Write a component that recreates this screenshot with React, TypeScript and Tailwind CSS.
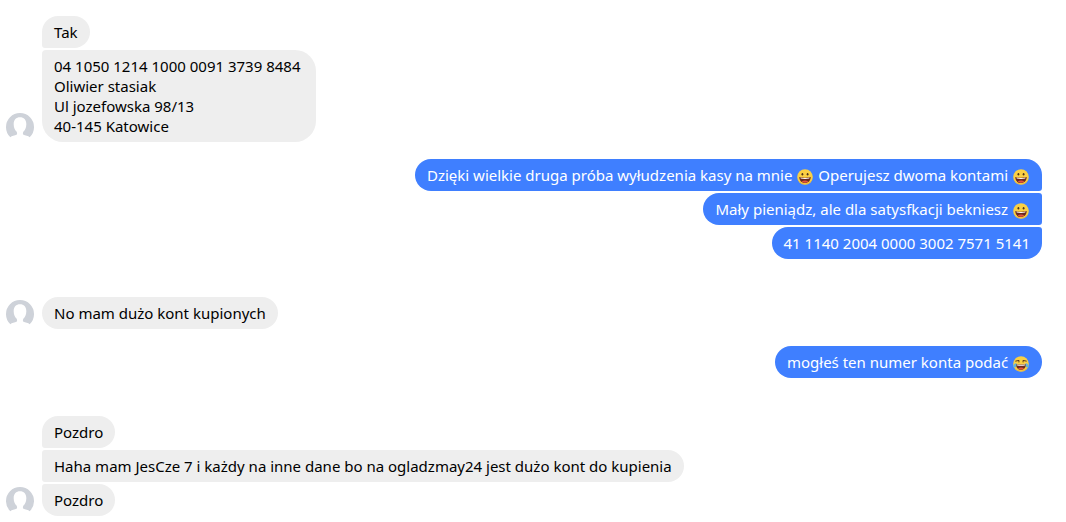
import type { ReactNode } from 'react';
import clsx from 'clsx';

interface MessageGroup {
  id: number;
  own: boolean;
  messages: ReactNode[];
}

// Grinning face
function Grin() {
  return (
    <svg role="img" aria-label="😀" viewBox="0 0 16 16" className="mx-px inline-block size-4 align-[-4px]">
      <circle cx="8" cy="8" r="7.8" fill="#fbd043" />
      <path d="M1 11a7.8 7.8 0 0 0 14 0 8.5 8.5 0 0 1-14 0z" fill="#e9a83a" />
      <ellipse cx="5.4" cy="5.2" rx=".9" ry="1.3" fill="#4d331b" />
      <ellipse cx="10.6" cy="5.2" rx=".9" ry="1.3" fill="#4d331b" />
      <path d="M2.3 8.1q5.7 1.5 11.4 0c0 3.7-2.4 6-5.7 6s-5.7-2.3-5.7-6z" fill="#6b2a20" />
      <path d="M3.4 8.5q4.6 1 9.2 0l-.4 1q-4.2 .8-8.400 0z" fill="#fff" />
      <path d="M4.6 12.600q3.400-2.400 6.800 0Q8 15 4.600 12.600z" fill="#e5533d" />
    </svg>
  );
}

// Face with tears of joy
function Joy() {
  return (
    <svg role="img" aria-label="😂" viewBox="0 0 16 16" className="mx-px inline-block size-4 align-[-4px]">
      <circle cx="8" cy="8" r="7.8" fill="#fbd043" />
      <path d="M1 11a7.8 7.8 0 0 0 14 0 8.5 8.5 0 0 1-14 0z" fill="#e9a83a" />
      <path d="M2.7 5.1 6 4.4 5.9 6M13.3 5.1 10 4.4l.1 1.6" fill="none" stroke="#5b3a1c" strokeWidth="1" strokeLinecap="round" />
      <path d="M3 8q5 1 10 0c0 3.8-2.1 5.8-5 5.8S3 11.8 3 8z" fill="#6b2a20" />
      <path d="M3.8 8.4q4.200.7 8.400 0l-.4 1q-3.800.6-7.600 0z" fill="#fff" />
      <path d="M4.9 12.5q3.100-2.200 6.200 0-3.100 2.200-6.200 0z" fill="#e5533d" />
      <path d="M3.5 6.9C1.5 7.3 0 8.8.2 10.4c.3 1.7 2.6 1.5 3 .1.3-1.1.1-2.300.3-3.600zM12.500 6.900c2 .4 3.500 1.900 3.300 3.500-.3 1.700-2.600 1.500-3 .1-.3-1.100-.1-2.300-.3-3.600z" fill="#62b5d8" />
    </svg>
  );
}

function Avatar() {
  return (
    <svg viewBox="0 0 28 28" aria-hidden="true" className="mb-px size-7 shrink-0">
      <path
        d="M4.400 24.300A14 14 0 1 1 23.600 24.300C22.500 22.800 19 22.500 17.500 21.800 16.700 21.200 16.700 19.800 17.500 18.600 19.300 17 20.200 14.500 20.300 11.500 20.500 6.800 18 4.200 14 4.200S7.500 6.800 7.700 11.500C7.800 14.500 8.700 17 10.500 18.600 11.300 19.800 11.300 21.200 10.500 21.800 9 22.500 5.500 22.800 4.400 24.300z"
        fill="#ced2d9"
      />
    </svg>
  );
}

const groups: MessageGroup[] = [
  {
    id: 1,
    own: false,
    messages: [
      'Tak',
      '04 1050 1214 1000 0091 3739 8484\u00a0\nOliwier stasiak\nUl jozefowska 98/13\n40-145 Katowice',
    ],
  },
  {
    id: 2,
    own: true,
    messages: [
      <>Dzięki wielkie druga próba wyłudzenia kasy na mnie <Grin /> Operujesz dwoma kontami <Grin /></>,
      <>Mały pieniądz, ale dla satysfkacji bekniesz <Grin /></>,
      '41 1140 2004 0000 3002 7571 5141',
    ],
  },
  { id: 3, own: false, messages: ['No mam dużo kont kupionych'] },
  { id: 4, own: true, messages: [<>mogłeś ten numer konta podać <Joy /></>] },
  {
    id: 5,
    own: false,
    messages: [
      'Pozdro',
      'Haha mam JesCze 7 i każdy na inne dane bo na ogladzmay24 jest dużo kont do kupienia',
      'Pozdro',
    ],
  },
];

function Group({ own, messages }: MessageGroup) {
  return (
    <li className={clsx('flex items-end gap-2', own ? 'mt-[17px] justify-end' : 'mt-[38px] first:mt-0')}>
      {!own && <Avatar />}
      <div className={clsx('flex min-w-0 flex-col gap-0.5', own ? 'items-end' : 'items-start')}>
        {messages.map((message, i) => {
          const first = i === 0;
          const last = i === messages.length - 1;
          return (
            <p
              key={i}
              className={clsx(
                'rounded-[21px] px-3 py-1.5 whitespace-pre-line',
                own ? 'bg-[#3f7fff] text-white' : 'bg-[#eeeeee] text-black',
                own && !first && 'rounded-tr-sm',
                own && !last && 'rounded-br-sm',
                !own && !first && 'rounded-tl-sm',
                !own && !last && 'rounded-bl-sm',
              )}
            >
              {message}
            </p>
          );
        })}
      </div>
    </li>
  );
}

export default function App() {
  return (
    <main className="bg-white pt-4 pr-6 pb-1.5 pl-1.5 font-['Noto_Sans','Open_Sans',sans-serif] text-[15px] leading-5">
      <ul>
        {groups.map((group) => (
          <Group key={group.id} {...group} />
        ))}
      </ul>
    </main>
  );
}
